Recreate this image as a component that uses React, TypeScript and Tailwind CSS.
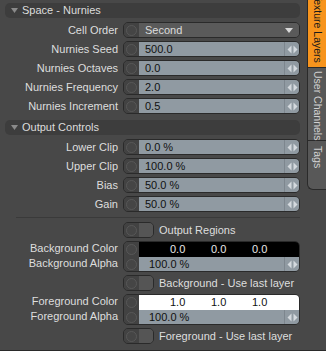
import React from 'react';

const font = { fontFamily: '"Liberation Sans", Arial, sans-serif' };

const Arrows = () => (
  <div className="flex h-full w-[15px] items-center justify-center border-l border-[#7d868e]">
    <svg width="11" height="9" viewBox="0 0 11 9">
      <path d="M4.5 0.5 L0.5 4.5 L4.5 8.5 Z" fill="#d4d9de" />
      <path d="M6.5 0.5 L10.5 4.5 L6.5 8.5 Z" fill="#d4d9de" />
    </svg>
  </div>
);

const Knob = () => (
  <div className="flex h-full w-[15px] shrink-0 items-center justify-center bg-[#424242]">
    <div className="h-[11px] w-[11px] rounded-full border border-[#585858] bg-[#454545]" />
  </div>
);

const Header = ({ title }: { title: string }) => (
  <div className="flex h-[15px] items-center rounded-[5px] bg-[#3d3d3d] pl-[6px] text-[#dcdcdc]">
    <svg width="7" height="6" viewBox="0 0 7 6" className="mr-[4px]">
      <path d="M0 0 L7 0 L3.5 5 Z" fill="#8a8a8a" />
    </svg>
    <span>{title}</span>
  </div>
);

const Label = ({ text }: { text: string }) => (
  <div className="w-[114px] shrink-0 whitespace-nowrap pr-[1px] text-right text-[#dedede]">{text}</div>
);

const NumRow = ({ label, value }: { label: string; value: string }) => (
  <div className="flex h-[16px] items-center gap-[4px]">
    <Label text={label} />
    <div className="flex h-full flex-1 overflow-hidden rounded-[5px] border border-[#2a2a2a]">
      <Knob />
      <div className="flex h-full flex-1 items-center bg-[#909aa2] pl-[6px] text-[#111]">{value}</div>
      <div className="h-full bg-[#909aa2]">
        <Arrows />
      </div>
    </div>
  </div>
);

const ToggleRow = ({ label }: { label: string }) => (
  <div className="flex h-[16px] items-center pl-[118px]">
    <div className="flex h-full w-[31px] shrink-0 overflow-hidden rounded-[5px] border border-[#2a2a2a]">
      <Knob />
      <div className="h-full flex-1 bg-[#555555]" />
    </div>
    <span className="ml-[5px] whitespace-nowrap text-[#dedede]">{label}</span>
  </div>
);

const ColorGroup = ({ name, color, text, vals }: { name: string; color: string; text: string; vals: string[] }) => (
  <div className="flex gap-[4px]">
    <div className="flex flex-col">
      <div className="flex h-[15px] items-center"><Label text={`${name} Color`} /></div>
      <div className="flex h-[15px] items-center"><Label text={`${name} Alpha`} /></div>
    </div>
    <div className="flex flex-1 flex-col overflow-hidden rounded-[5px] border border-[#2a2a2a]">
      <div className="flex h-[15px]">
        <Knob />
        <div className={`flex h-full flex-1 items-center pl-[31px] ${color} ${text}`}>
          {vals.map((v, i) => (
            <span key={i} className="w-[41px]">{v}</span>
          ))}
        </div>
      </div>
      <div className="flex h-[14px]">
        <Knob />
        <div className="flex h-full flex-1 items-center bg-[#909aa2] pl-[10px] text-[#111]">100.0 %</div>
        <div className="h-full bg-[#909aa2]">
          <Arrows />
        </div>
      </div>
    </div>
  </div>
);

export default function App() {
  return (
    <div className="flex h-[351px] w-[326px] overflow-hidden border-b border-[#2a2a2a] bg-[#484848] text-[11px] leading-none" style={font}>
      <div className="flex w-[305px] shrink-0 flex-col px-[5px] pt-[3px]">
        <Header title="Space - Nurnies" />
        <div className="mt-[4px] flex flex-col gap-[3px]">
          <div className="flex h-[16px] items-center gap-[4px]">
            <Label text="Cell Order" />
            <div className="flex h-full flex-1 overflow-hidden rounded-[5px] border border-[#2a2a2a]">
              <Knob />
              <div className="flex h-full flex-1 items-center justify-between bg-[#5a5a5a] pl-[6px] pr-[6px] text-[#dcdcdc]">
                <span>Second</span>
                <svg width="8" height="5" viewBox="0 0 8 5">
                  <path d="M0 0 L8 0 L4 5 Z" fill="#d8d8d8" />
                </svg>
              </div>
            </div>
          </div>
          <NumRow label="Nurnies Seed" value="500.0" />
          <NumRow label="Nurnies Octaves" value="0.0" />
          <NumRow label="Nurnies Frequency" value="2.0" />
          <NumRow label="Nurnies Increment" value="0.5" />
        </div>
        <div className="mt-[6px]">
          <Header title="Output Controls" />
        </div>
        <div className="mt-[4px] flex flex-col gap-[3px]">
          <NumRow label="Lower Clip" value="0.0 %" />
          <NumRow label="Upper Clip" value="100.0 %" />
          <NumRow label="Bias" value="50.0 %" />
          <NumRow label="Gain" value="50.0 %" />
        </div>
        <div className="ml-[11px] mt-[5px] border-t border-[#3a3a3a]" />
        <div className="mt-[4px] flex flex-col gap-[3px]">
          <ToggleRow label="Output Regions" />
          <ColorGroup name="Background" color="bg-black" text="text-[#e8e8e8]" vals={['0.0', '0.0', '0.0']} />
          <ToggleRow label="Background - Use last layer" />
          <ColorGroup name="Foreground" color="bg-white" text="text-[#111]" vals={['1.0', '1.0', '1.0']} />
          <ToggleRow label="Foreground - Use last layer" />
        </div>
      </div>
      {/* side tabs */}
      <div className="flex w-[21px] shrink-0 flex-col pl-[2px] text-[10.5px]">
        <div className="flex h-[68px] shrink-0 justify-end overflow-hidden border-b border-l border-[#2a2a2a] bg-[#f7941d] pl-[4px] text-[#1a1a1a]">
          <div className="flex w-full flex-col items-start justify-end pb-[4px]">
            <span className="whitespace-nowrap [writing-mode:vertical-rl]">Texture Layers</span>
          </div>
        </div>
        <div className="h-[73px] shrink-0 whitespace-nowrap border-b border-l border-[#2a2a2a] bg-[#585858] pr-[3px] pt-[3px] text-[#d0d0d0] [writing-mode:vertical-rl]">
          User Channels
        </div>
        <div className="h-[49px] shrink-0 whitespace-nowrap rounded-bl-[6px] border-b border-l border-[#2a2a2a] bg-[#585858] pr-[3px] pt-[5px] text-[#d0d0d0] [writing-mode:vertical-rl]">
          Tags
        </div>
      </div>
    </div>
  );
}
